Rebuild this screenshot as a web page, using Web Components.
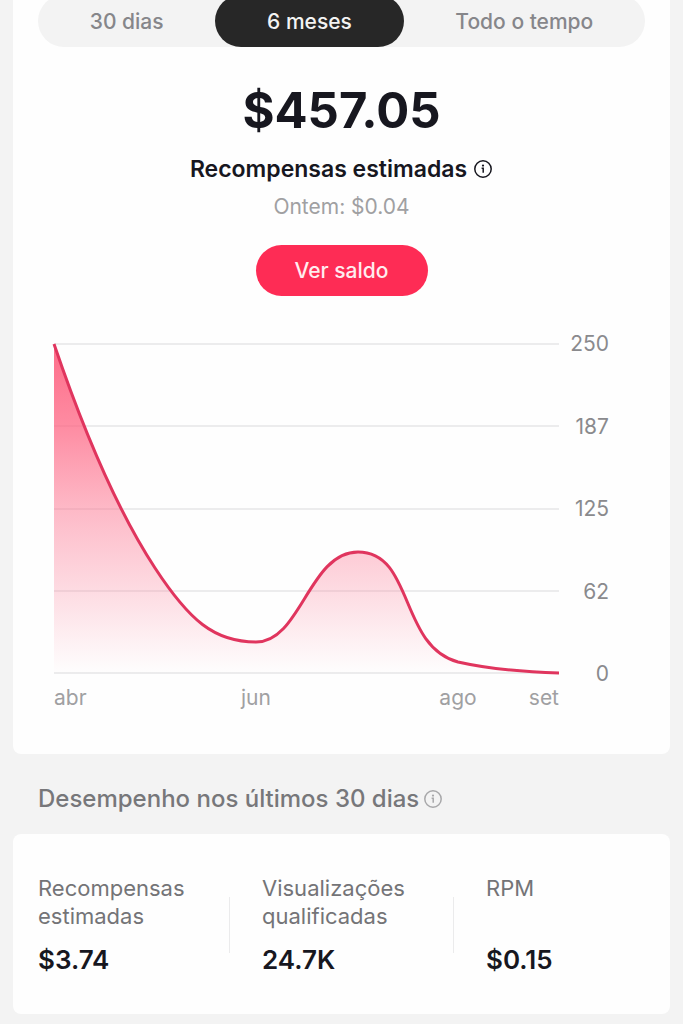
<!DOCTYPE html>
<html lang="pt">
<head>
<meta charset="utf-8">
<meta name="viewport" content="width=device-width, initial-scale=1">
<title>Recompensas</title>
<style>
  body {
    margin: 0;
    background: #f3f3f3;
    color: #17171f;
    font-family: Inter, "Liberation Sans", sans-serif;
  }
</style>
</head>
<body>
<rewards-page></rewards-page>

<script>
// info icon
const infoIcon = document.createElement('template')
infoIcon.innerHTML = `
<style>
  :host {
    display: inline-flex;
  }
  button {
    display: flex;
    padding: 0;
    border: none;
    background: none;
    color: inherit;
    cursor: pointer;
  }
  svg {
    width: 20px;
    height: 20px;
  }
</style>
<button aria-label="Info">
  <svg viewBox="0 0 20 20" fill="none" stroke="currentColor">
    <circle cx="10" cy="10" r="8.2" stroke-width="1.5"/>
    <circle cx="10" cy="6.6" r="1.1" fill="currentColor" stroke="none"/>
    <path d="M8.6 9.2H10.2V13.8" stroke-width="1.5"/>
  </svg>
</button>
`
class InfoIcon extends HTMLElement{
    constructor(){
        super()
        this.attachShadow({mode:'open'})
        this.shadowRoot.appendChild(infoIcon.content.cloneNode(true))
    }
}
window.customElements.define('info-icon', InfoIcon)

// white card
const pageCard = document.createElement('template')
pageCard.innerHTML = `
<style>
  :host {
    display: block;
    background: #fefefe;
    border-radius: 8px;
  }
</style>
<slot></slot>
`
class PageCard extends HTMLElement{
    constructor(){
        super()
        this.attachShadow({mode:'open'})
        this.shadowRoot.appendChild(pageCard.content.cloneNode(true))
    }
}
window.customElements.define('page-card', PageCard)

// period tabs
const periodTabs = document.createElement('template')
periodTabs.innerHTML = `
<style>
  :host {
    display: flex;
    height: 52px;
    background: #f3f3f3;
    border-radius: 26px;
  }
  button {
    flex: 1 1 auto;
    padding: 0;
    border: none;
    border-radius: 26px;
    background: none;
    color: #86868a;
    font-family: inherit;
    font-size: 21px;
    font-weight: 500;
    cursor: pointer;
  }
  button.active {
    background: #272727;
    color: #f3f3f3;
  }
</style>
`
class PeriodTabs extends HTMLElement{
    constructor(){
        super()
        this.attachShadow({mode:'open'})
        this.shadowRoot.appendChild(periodTabs.content.cloneNode(true))
    }
    connectedCallback(){
        const names = this.getAttribute('items').split(',')
        names.forEach(name => {
            const btn = document.createElement('button')
            btn.textContent = name
            if(name === this.getAttribute('selected')){
                btn.classList.add('active')
            }
            btn.addEventListener('click', () => {
                this.shadowRoot.querySelector('.active').classList.remove('active')
                btn.classList.add('active')
            })
            this.shadowRoot.appendChild(btn)
        })
    }
}
window.customElements.define('period-tabs', PeriodTabs)

// balance block
const balanceSummary = document.createElement('template')
balanceSummary.innerHTML = `
<style>
  :host {
    display: flex;
    flex-direction: column;
    align-items: center;
  }
  .amount {
    font-size: 49px;
    line-height: 64px;
    font-weight: 700;
  }
  .label {
    display: flex;
    align-items: center;
    gap: 6px;
    margin-top: 12px;
    font-size: 23px;
    line-height: 28px;
    font-weight: 600;
  }
  .yesterday {
    margin-top: 10px;
    color: #a0a0a2;
    font-size: 21px;
    line-height: 28px;
  }
  .balanceBtn {
    height: 51px;
    margin-top: 24px;
    padding: 0 39px;
    border: none;
    border-radius: 26px;
    background: #fe2c55;
    color: #ffecef;
    font-family: inherit;
    font-size: 21px;
    font-weight: 500;
    cursor: pointer;
  }
</style>
<div class="amount"><slot name="amount"></slot></div>
<div class="label"><slot name="label"></slot><info-icon></info-icon></div>
<div class="yesterday"><slot name="yesterday"></slot></div>
<button class="balanceBtn"><slot name="action"></slot></button>
`
class BalanceSummary extends HTMLElement{
    constructor(){
        super()
        this.attachShadow({mode:'open'})
        this.shadowRoot.appendChild(balanceSummary.content.cloneNode(true))
    }
}
window.customElements.define('balance-summary', BalanceSummary)

// area chart
const rewardsChart = document.createElement('template')
rewardsChart.innerHTML = `
<style>
  :host {
    display: grid;
    grid-template-columns: 1fr 50px;
    color: #8a8a8d;
    font-size: 21px;
    line-height: 24px;
  }
  .plot {
    display: grid;
    height: 331px;
    margin: 11px 0 12px;
  }
  .lines, svg {
    grid-area: 1 / 1;
    width: 100%;
    height: 100%;
  }
  .lines {
    display: flex;
    flex-direction: column;
    justify-content: space-between;
  }
  .lines i {
    height: 2px;
    background: #ececed;
  }
  svg {
    overflow: visible;
  }
  .yAxis {
    display: flex;
    flex-direction: column;
    justify-content: space-between;
    text-align: right;
  }
  .xAxis {
    display: grid;
    grid-template-columns: repeat(5, 1fr);
    color: #a0a0a2;
  }
  .xAxis span {
    grid-row: 1;
  }
  .jun {
    grid-column: 2 / 4;
    justify-self: center;
  }
  .ago {
    grid-column: 4 / 6;
    justify-self: center;
  }
  .set {
    grid-column: 5 / 6;
    justify-self: end;
  }
</style>
<div class="plot">
  <div class="lines"><i></i><i></i><i></i><i></i><i></i></div>
  <svg viewBox="0 0 505 331" preserveAspectRatio="none">
    <defs>
      <linearGradient id="fade" gradientUnits="userSpaceOnUse" x1="0" y1="0" x2="0" y2="331">
        <stop offset="0" stop-color="#fd5f7e" stop-opacity=".92"/>
        <stop offset=".25" stop-color="#fe5f7e" stop-opacity=".72"/>
        <stop offset=".5" stop-color="#fd6d8a" stop-opacity=".48"/>
        <stop offset=".75" stop-color="#fb7893" stop-opacity=".26"/>
        <stop offset="1" stop-color="#fb8098" stop-opacity="0"/>
      </linearGradient>
    </defs>
    <path fill="url(#fade)" d="M0 1C33 98 67 173 101 225C135 277 160 299 202 299C247 299 255 209 304 209C360 209 345 303 404 319C435 326 471 329 505 330V331H0Z"/>
    <path fill="none" stroke="#e0355e" stroke-width="3" vector-effect="non-scaling-stroke" d="M0 1C33 98 67 173 101 225C135 277 160 299 202 299C247 299 255 209 304 209C360 209 345 303 404 319C435 326 471 329 505 330"/>
  </svg>
</div>
<div class="yAxis"><span>250</span><span>187</span><span>125</span><span>62</span><span>0</span></div>
<div class="xAxis">
  <span>abr</span>
  <span class="jun">jun</span>
  <span class="ago">ago</span>
  <span class="set">set</span>
</div>
`
class RewardsChart extends HTMLElement{
    constructor(){
        super()
        this.attachShadow({mode:'open'})
        this.shadowRoot.appendChild(rewardsChart.content.cloneNode(true))
    }
}
window.customElements.define('rewards-chart', RewardsChart)

// one number with its caption
const statItem = document.createElement('template')
statItem.innerHTML = `
<style>
  :host {
    display: flex;
    flex-direction: column;
    justify-content: space-between;
    gap: 14px;
  }
  .caption {
    color: #747477;
    font-size: 22px;
    line-height: 28px;
  }
  .value {
    font-size: 26px;
    line-height: 32px;
    font-weight: 600;
  }
</style>
<div class="caption"><slot></slot></div>
<div class="value"><slot name="value"></slot></div>
`
class StatItem extends HTMLElement{
    constructor(){
        super()
        this.attachShadow({mode:'open'})
        this.shadowRoot.appendChild(statItem.content.cloneNode(true))
    }
}
window.customElements.define('stat-item', StatItem)

// page
const rewardsPage = document.createElement('template')
rewardsPage.innerHTML = `
<style>
  :host {
    display: flow-root;
    overflow: hidden;
    padding: 0 13px 10px;
  }
  .overview {
    margin-top: -16px;
    padding: 11px 25px 44px;
  }
  balance-summary {
    margin-top: 32px;
  }
  rewards-chart {
    margin: 36px 36px 0 16px;
  }
  h2 {
    display: flex;
    align-items: center;
    gap: 4px;
    margin: 0;
    padding: 31px 25px 21px;
    color: #77777a;
    font-size: 24px;
    line-height: 28px;
    font-weight: 500;
  }
  h2 info-icon {
    color: #a8a8aa;
  }
  .stats {
    display: grid;
    grid-template-columns: 1fr 1px 1fr 1px 1fr;
    gap: 32px;
    padding: 40px 25px 38px;
  }
  .divider {
    align-self: center;
    height: 56px;
    background: #ebebec;
  }
</style>
<page-card class="overview">
  <period-tabs items="30 dias,6 meses,Todo o tempo" selected="6 meses"></period-tabs>
  <balance-summary>
    <span slot="amount">$457.05</span>
    <span slot="label">Recompensas estimadas</span>
    <span slot="yesterday">Ontem: $0.04</span>
    <span slot="action">Ver saldo</span>
  </balance-summary>
  <rewards-chart></rewards-chart>
</page-card>
<h2>Desempenho nos últimos 30 dias <info-icon></info-icon></h2>
<page-card class="stats">
  <stat-item>Recompensas estimadas<span slot="value">$3.74</span></stat-item>
  <div class="divider"></div>
  <stat-item>Visualizações qualificadas<span slot="value">24.7K</span></stat-item>
  <div class="divider"></div>
  <stat-item>RPM<span slot="value">$0.15</span></stat-item>
</page-card>
`
class RewardsPage extends HTMLElement{
    constructor(){
        super()
        this.attachShadow({mode:'open'})
        this.shadowRoot.appendChild(rewardsPage.content.cloneNode(true))
    }
}
window.customElements.define('rewards-page', RewardsPage)
</script>
</body>
</html>
